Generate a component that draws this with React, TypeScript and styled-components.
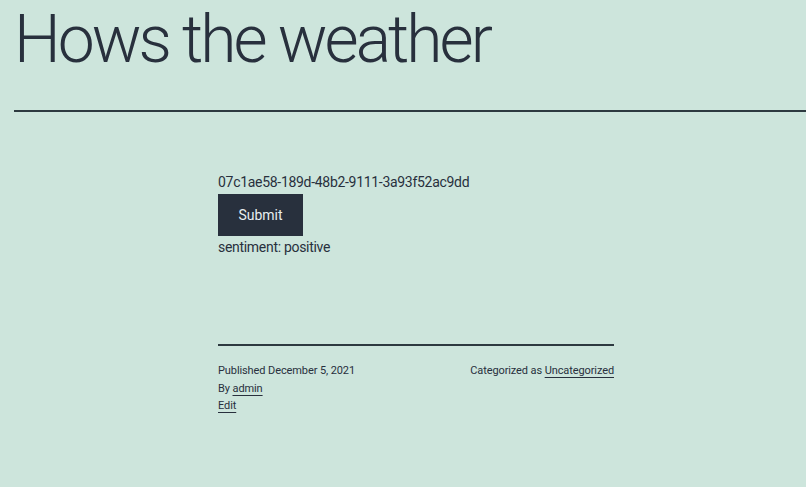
import React from 'react';
import styled, { createGlobalStyle } from 'styled-components';

const GlobalStyle = createGlobalStyle`
  body {
    margin: 0;
    background: #cde5dc;
    color: #28303d;
    font-family: Roboto, "Noto Sans", sans-serif;
  }
`;

const SPage = styled.div`
  min-height: 487px;
  display: flex;
  flex-direction: column;
`;

const SHeader = styled.header`
  padding-left: 14px;
`;

const STitle = styled.h1`
  margin: 0;
  padding-top: 2px;
  font-size: 66px;
  font-weight: 300;
  line-height: 76px;
  letter-spacing: -3px;
`;

const SRule = styled.hr`
  border: none;
  height: 2px;
  background: #2d3a40;
  margin: 0;
`;

const SHeaderRule = styled(SRule)`
  margin-top: 32px;
`;

const SContent = styled.main`
  width: 396px;
  margin-left: 218px;
  padding-top: 60px;
  font-size: 14px;
`;

const SLine = styled.p`
  margin: 0;
  line-height: 20px;
  letter-spacing: -0.3px;
`;

const SBtn = styled.button`
  display: block;
  width: 85px;
  height: 42px;
  border: none;
  background: #28303d;
  color: #e8eef0;
  font-family: inherit;
  font-size: 14px;
  margin: 2px 0 1px;
  cursor: pointer;
`;

const SFooter = styled.footer`
  margin-top: 87px;
`;

const SMeta = styled.div`
  display: flex;
  justify-content: space-between;
  padding-top: 16px;
  font-size: 11px;
  line-height: 17.5px;
  letter-spacing: -0.1px;
`;

const SCol = styled.div`
  display: flex;
  flex-direction: column;
`;

const SLink = styled.a`
  color: inherit;
  text-decoration: underline;
  text-underline-offset: 3px;
  text-decoration-thickness: 1px;
`;

export default function App() {
  return (
    <SPage>
      <GlobalStyle />
      <SHeader>
        <STitle>Hows the weather</STitle>
        <SHeaderRule />
      </SHeader>
      <SContent>
        <SLine>07c1ae58-189d-48b2-9111-3a93f52ac9dd</SLine>
        <SBtn>Submit</SBtn>
        <SLine>sentiment: positive</SLine>
        <SFooter>
          <SRule />
          <SMeta>
            <SCol>
              <span>Published December 5, 2021</span>
              <span>
                By <SLink href="#">admin</SLink>
              </span>
              <span>
                <SLink href="#">Edit</SLink>
              </span>
            </SCol>
            <span>
              Categorized as <SLink href="#">Uncategorized</SLink>
            </span>
          </SMeta>
        </SFooter>
      </SContent>
    </SPage>
  );
}
